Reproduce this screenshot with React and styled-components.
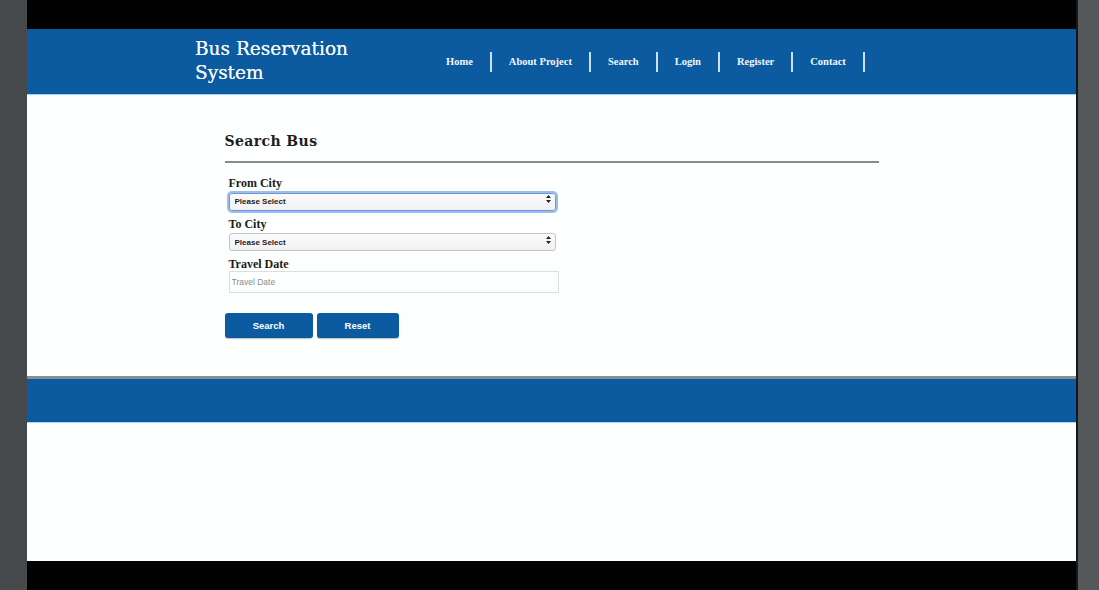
import React from 'react'
import styled, { createGlobalStyle } from 'styled-components'

const GlobalStyle = createGlobalStyle`
  html, body { margin: 0; padding: 0; background: #000; }
  * { box-sizing: border-box; }
`

const Frame = styled.div`
  display: flex;
  width: 1099px;
  height: 590px;
  overflow: hidden;
`

const SideStrip = styled.div`
  flex: 0 0 ${p => p.$w}px;
  background: ${p => p.$right ? '#54585a' : '#46494b'};
  border-left: ${p => p.$right ? '2px solid #161818' : 'none'};
`

const Screen = styled.div`
  flex: 1;
  display: flex;
  flex-direction: column;
  background: #fcfffd;
`

const BlackBar = styled.div`
  flex: 0 0 ${p => p.$h}px;
  background: #020202;
`

const Header = styled.header`
  flex: 0 0 66px;
  background: #0c5aa0;
  border-bottom: 1px solid #9fd0f5;
  display: flex;
  justify-content: center;
`

const HeaderInner = styled.div`
  width: 713px;
  display: flex;
  align-items: center;
`

const Brand = styled.div`
  flex: 0 0 251px;
  color: #f4f8fc;
  font-family: 'DejaVu Serif', Georgia, serif;
  font-size: 18.5px;
  line-height: 24px;
  padding-bottom: 2px;
  text-shadow: 0 0 0.4px #f4f8fc;
`

const Nav = styled.nav`
  display: flex;
  align-items: center;
`

const NavLink = styled.a`
  color: #f2f6fb;
  font-family: 'Liberation Serif', Georgia, serif;
  font-weight: bold;
  font-size: 10.5px;
  line-height: 20px;
  padding: 0 17px 0 ${p => p.$first ? 0 : 17}px;
  border-right: 2px solid #c8e2fa;
  text-decoration: none;
  white-space: nowrap;
`

const Main = styled.main`
  flex: 0 0 281px;
  display: flex;
  justify-content: center;
`

const Content = styled.div`
  width: 654px;
  padding-top: 36px;
`

const Title = styled.h2`
  margin: 0;
  font-family: 'DejaVu Serif', Georgia, serif;
  font-size: 14px;
  font-weight: bold;
  letter-spacing: 0.4px;
  color: #1e1e1e;
  line-height: 20px;
`

const Rule = styled.hr`
  margin: 10px 0 14px;
  border: none;
  border-top: 2px solid #8a8a8a;
`

const Field = styled.div`
  padding-left: 4px;
  margin-bottom: 7px;
`

const Label = styled.label`
  display: block;
  font-family: 'Liberation Serif', 'Times New Roman', serif;
  font-weight: bold;
  font-size: 12px;
  line-height: 13px;
  color: #1b1b1b;
`

const SelectWrap = styled.div`
  position: relative;
  width: 327px;
`

const Select = styled.select`
  appearance: none;
  width: 100%;
  height: 18px;
  padding: 0 5px;
  border-radius: 3px;
  border: 1px solid ${p => p.$focus ? '#6c98d8' : '#c4c4c4'};
  box-shadow: ${p => p.$focus ? '0 0 0 2px #9cbdf0' : 'none'};
  background: linear-gradient(#fbfbfb, #f1f1f1);
  font-family: 'Liberation Sans', Arial, sans-serif;
  font-weight: bold;
  font-size: 8px;
  color: #222;
  outline: none;
`

const Arrows = styled.svg`
  position: absolute;
  right: 5px;
  top: 5px;
  pointer-events: none;
`

const TextInput = styled.input`
  width: 330px;
  height: 22px;
  padding: 0 2px;
  border: 1px solid #dedede;
  background: #fcfffd;
  font-family: 'Liberation Sans', Arial, sans-serif;
  font-size: 8.5px;
  color: #222;
  outline: none;
  &::placeholder { color: #8e8e8e; }
`

const Buttons = styled.div`
  display: flex;
  gap: 4px;
  margin-top: 20px;
`

const Button = styled.button`
  width: ${p => p.$w}px;
  height: 25px;
  border: none;
  border-radius: 3px;
  background: #0c5aa0;
  box-shadow: 0 1px 1px rgba(0,0,0,0.25);
  color: #fff;
  font-family: 'Liberation Sans', Arial, sans-serif;
  font-weight: bold;
  font-size: 9.5px;
  cursor: pointer;
`

const Footer = styled.footer`
  flex: 0 0 47px;
  background: #0c5aa0;
  border-top: 3px solid #8a8e93;
  border-bottom: 1px solid #a9d6f7;
`

const Blank = styled.div`
  flex: 1;
  background: #fcfffd;
`

function CitySelect({ focus }) {
  return (
    <SelectWrap>
      <Select $focus={focus} defaultValue="">
        <option value="">Please Select</option>
      </Select>
      <Arrows width="5" height="8" viewBox="0 0 5 8">
        <path d="M2.5 0 L5 3 L0 3 Z M2.5 8 L5 5 L0 5 Z" fill="#222" />
      </Arrows>
    </SelectWrap>
  )
}

const links = ['Home', 'About Project', 'Search', 'Login', 'Register', 'Contact']

export default function App() {
  return (
    <Frame>
      <GlobalStyle />
      <SideStrip $w={27} />
      <Screen>
        <BlackBar $h={29} />
        <Header>
          <HeaderInner>
            <Brand>Bus Reservation<br />System</Brand>
            <Nav>
              {links.map((l, i) => (
                <NavLink key={l} href="#" $first={i === 0}>{l}</NavLink>
              ))}
            </Nav>
          </HeaderInner>
        </Header>
        <Main>
          <Content>
            <Title>Search Bus</Title>
            <Rule />
            <Field>
              <Label>From City</Label>
              <CitySelect focus />
            </Field>
            <Field>
              <Label>To City</Label>
              <CitySelect />
            </Field>
            <Field>
              <Label>Travel Date</Label>
              <TextInput placeholder="Travel Date" />
            </Field>
            <Buttons>
              <Button $w={88}>Search</Button>
              <Button $w={82}>Reset</Button>
            </Buttons>
          </Content>
        </Main>
        <Footer />
        <Blank />
        <BlackBar $h={29} />
      </Screen>
      <SideStrip $w={23} $right />
    </Frame>
  )
}
